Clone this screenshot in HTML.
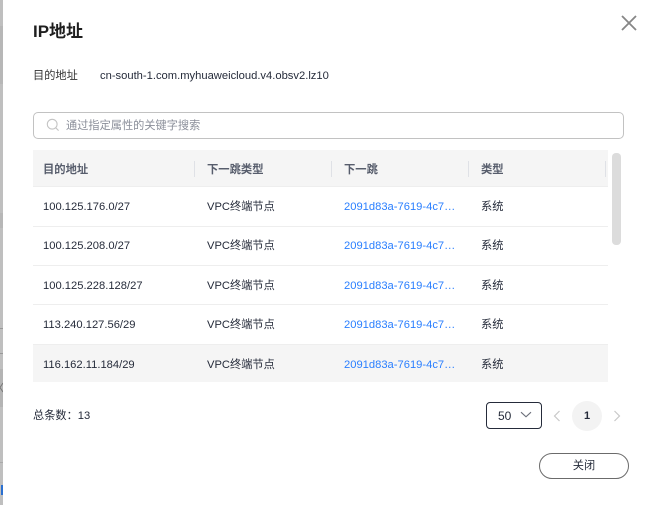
<!DOCTYPE html>
<html lang="zh">
<head>
<meta charset="utf-8">
<style>
html,body{margin:0;padding:0;width:652px;height:505px;overflow:hidden;background:#fff}
body{position:relative;font-family:"Liberation Sans","Noto Sans CJK SC",sans-serif;font-size:11.2px;color:#252b3a}
.a{position:absolute;white-space:nowrap}
.t{line-height:16px;height:16px}
.bar{position:absolute;left:0;width:3px;background:#bdbdbd}
.row{position:absolute;left:33px;width:575px;border-bottom:1px solid #eeeeee;box-sizing:border-box}
.sep{position:absolute;top:161px;width:1px;height:16px;background:#dfe1e6}
.h{color:#575d6c;font-weight:bold;font-size:11.3px}
.l{color:#2a7fff}
</style>
</head>
<body>
<div class="bar" style="top:0;height:505px;background:#bfbfbf"></div>
<div class="bar" style="top:26px;height:58px;background:#b7b7b7"></div>
<div class="bar" style="top:213px;height:15px;background:#b7b7b7"></div>
<div class="bar" style="top:328px;height:1px;background:#999"></div>
<div class="bar" style="top:353px;height:1px;background:#999"></div>
<div class="bar" style="top:369px;height:38px;background:#b4b4b4"></div>
<svg class="a" style="left:0;top:382px" width="3" height="11" viewBox="0 0 3 11"><path d="M3 1L0 5.5L3 10" stroke="#777" stroke-width="1" fill="none"/></svg>
<div class="bar" style="top:462px;height:1px;background:#aaa"></div>
<div class="bar" style="top:485px;height:10px;left:1px;width:1.5px;background:#2a6fd0"></div>

<div class="a" style="left:33px;top:20px;font-size:17px;font-weight:bold;line-height:24px;color:#1f1f1f">IP地址</div>
<svg class="a" style="left:620px;top:14px" width="18" height="18" viewBox="0 0 18 18"><path d="M2 2L16 16M16 2L2 16" stroke="#868686" stroke-width="1.8" fill="none"/></svg>

<div class="a t" style="left:33px;top:68px;color:#333">目的地址</div>
<div class="a t" style="left:100px;top:68px;color:#252b3a;font-size:11.2px">cn-south-1.com.myhuaweicloud.v4.obsv2.lz10</div>

<div class="a" style="left:33px;top:112px;width:591px;height:27px;box-sizing:border-box;border:1px solid #c2c2c2;border-radius:5px"></div>
<svg class="a" style="left:46px;top:118px" width="14" height="14" viewBox="0 0 14 14"><circle cx="6.2" cy="6.2" r="4.9" stroke="#c4c4c4" stroke-width="1.1" fill="none"/><path d="M9.8 9.8L12.6 12.6" stroke="#c4c4c4" stroke-width="1.1" fill="none"/></svg>
<div class="a t" style="left:66px;top:118px;color:#8a8e99">通过指定属性的关键字搜索</div>

<div class="a" style="left:33px;top:150px;width:575px;height:37px;background:#f5f5f5;border-bottom:1px solid #eeeeee;box-sizing:border-box"></div>
<div class="sep" style="left:194px"></div>
<div class="sep" style="left:331px"></div>
<div class="sep" style="left:468px"></div>
<div class="sep" style="left:605px"></div>
<div class="a t h" style="left:43px;top:162px">目的地址</div>
<div class="a t h" style="left:207px;top:162px">下一跳类型</div>
<div class="a t h" style="left:344px;top:162px">下一跳</div>
<div class="a t h" style="left:481px;top:162px">类型</div>

<div class="a" style="left:612px;top:153px;width:9px;height:92px;background:#dcdcdc;border-radius:4px"></div>

<div class="row" style="top:187px;height:40px"></div>
<div class="row" style="top:227px;height:39px"></div>
<div class="row" style="top:266px;height:39px"></div>
<div class="row" style="top:305px;height:40px"></div>
<div class="row" style="top:344px;height:38px;background:#f5f5f5;border-bottom:0;border-top:1px solid #eeeeee"></div>

<div class="a t" style="left:43px;top:199px">100.125.176.0/27</div>
<div class="a t" style="left:207px;top:199px">VPC终端节点</div>
<div class="a t l" style="left:344px;top:199px">2091d83a-7619-4c7…</div>
<div class="a t" style="left:481px;top:199px">系统</div>

<div class="a t" style="left:43px;top:238px">100.125.208.0/27</div>
<div class="a t" style="left:207px;top:238px">VPC终端节点</div>
<div class="a t l" style="left:344px;top:238px">2091d83a-7619-4c7…</div>
<div class="a t" style="left:481px;top:238px">系统</div>

<div class="a t" style="left:43px;top:278px">100.125.228.128/27</div>
<div class="a t" style="left:207px;top:278px">VPC终端节点</div>
<div class="a t l" style="left:344px;top:278px">2091d83a-7619-4c7…</div>
<div class="a t" style="left:481px;top:278px">系统</div>

<div class="a t" style="left:43px;top:317px">113.240.127.56/29</div>
<div class="a t" style="left:207px;top:317px">VPC终端节点</div>
<div class="a t l" style="left:344px;top:317px">2091d83a-7619-4c7…</div>
<div class="a t" style="left:481px;top:317px">系统</div>

<div class="a t" style="left:43px;top:357px">116.162.11.184/29</div>
<div class="a t" style="left:207px;top:357px">VPC终端节点</div>
<div class="a t l" style="left:344px;top:357px">2091d83a-7619-4c7…</div>
<div class="a t" style="left:481px;top:357px">系统</div>

<div class="a t" style="left:33px;top:408px">总条数：<span>13</span></div>

<div class="a" style="left:486px;top:402px;width:56px;height:27px;box-sizing:border-box;border:1px solid #252b3a;border-radius:4px"></div>
<div class="a t" style="left:498px;top:408px;font-size:12px">50</div>
<svg class="a" style="left:520px;top:411px" width="12" height="8" viewBox="0 0 12 8"><path d="M1 1.2L6 5.8L11 1.2" stroke="#6b6f7a" stroke-width="1.1" fill="none"/></svg>
<svg class="a" style="left:553px;top:410px" width="8" height="12" viewBox="0 0 8 12"><path d="M6.5 1L1.5 6L6.5 11" stroke="#c8c8c8" stroke-width="1.2" fill="none"/></svg>
<div class="a" style="left:572px;top:401px;width:30px;height:30px;border-radius:50%;background:#f3f3f3"></div>
<div class="a t" style="left:572px;top:408px;width:30px;text-align:center;font-weight:bold;font-size:11px">1</div>
<svg class="a" style="left:613px;top:410px" width="8" height="12" viewBox="0 0 8 12"><path d="M1.5 1L6.5 6L1.5 11" stroke="#c8c8c8" stroke-width="1.2" fill="none"/></svg>

<div class="a" style="left:539px;top:453px;width:90px;height:26px;box-sizing:border-box;border:1px solid #6b6b6b;border-radius:13px"></div>
<div class="a t" style="left:539px;top:458px;width:90px;text-align:center;color:#252b3a">关闭</div>
</body>
</html>
